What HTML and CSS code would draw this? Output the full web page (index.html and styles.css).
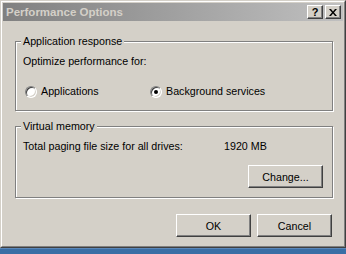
FILE: index.html
```html
<!DOCTYPE html>
<html lang="en">
<head>
    <meta charset="UTF-8">
    <meta name="viewport" content="width=device-width, initial-scale=1.0">
    <title>Performance Options</title>
    <link rel="stylesheet" href="styles.css">
</head>
<body>
    <div class="window">
        <div class="frame">
            <div class="caption">
                <span class="caption-text">Performance Options</span>
                <div class="caption-buttons">
                    <button class="caption-btn help">?</button>
                    <button class="caption-btn close">
                        <svg width="8" height="7" viewBox="0 0 8 7">
                            <path d="M0 0h2l2 2.5L6 0h2L5 3.5 8 7H6L4 4.5 2 7H0l3-3.5z" fill="#000"/>
                        </svg>
                    </button>
                </div>
            </div>
            <div class="content">
                <fieldset class="group">
                    <legend>Application response</legend>
                    <div class="row">Optimize performance for:</div>
                    <div class="options">
                        <label class="option first"><span class="radio"></span>Applications</label>
                        <label class="option"><span class="radio checked"></span>Background services</label>
                    </div>
                </fieldset>
                <fieldset class="group">
                    <legend>Virtual memory</legend>
                    <div class="row">
                        <span class="label-wide">Total paging file size for all drives:</span>
                        <span>1920 MB</span>
                    </div>
                    <div class="group-actions">
                        <button class="btn">Change...</button>
                    </div>
                </fieldset>
                <div class="dialog-actions">
                    <button class="btn">OK</button>
                    <button class="btn">Cancel</button>
                </div>
            </div>
        </div>
    </div>
    <div class="taskbar"></div>
</body>
</html>
```

FILE: styles.css
```css
body {
    margin: 0;
    font-family: "Liberation Sans", Arial, sans-serif;
    font-size: 10.7px;
    line-height: 13px;
    color: #000;
    background: #d4d0c8;
}
.window {
    width: 346px;
    height: 248px;
    box-sizing: border-box;
    border: 1px solid;
    border-color: #d4d0c8 #404040 #404040 #d4d0c8;
}
.frame {
    height: 100%;
    box-sizing: border-box;
    border: 1px solid;
    border-color: #fff #808080 #808080 #fff;
    padding: 1px;
}
.caption {
    height: 18px;
    display: flex;
    align-items: center;
    justify-content: space-between;
    background: linear-gradient(to right, #808080, #c0c0c0);
    padding: 0 2px 0 3px;
}
.caption-text {
    font-weight: bold;
    font-size: 11.5px;
    color: #d4d0c8;
}
.caption-buttons {
    display: flex;
    gap: 2px;
}
.caption-btn {
    width: 16px;
    height: 14px;
    padding: 0;
    margin: 0;
    display: flex;
    align-items: center;
    justify-content: center;
    background: #d4d0c8;
    border: 1px solid;
    border-color: #fff #404040 #404040 #fff;
    box-shadow: inset -1px -1px 0 #808080;
    font-family: "Liberation Sans", Arial, sans-serif;
    font-weight: bold;
    font-size: 11px;
    line-height: 11px;
    color: #000;
}
.content {
    padding: 0 10px 0 12px;
}
.group {
    margin: 14px 0 0;
    padding: 7px 9px 12px 7px;
    border: 1px solid #808080;
    box-shadow: inset 1px 1px 0 #fff, 1px 1px 0 #fff;
    min-width: 0;
}
.group + .group {
    margin-top: 9px;
    padding-bottom: 9px;
}
.group legend {
    padding: 0 2px;
    margin-left: -2px;
    background: #d4d0c8;
}
.row {
    display: flex;
}
.label-wide {
    width: 201px;
}
.options {
    display: flex;
    margin-top: 17px;
}
.option {
    display: flex;
    align-items: center;
    gap: 4px;
    padding-left: 2px;
}
.option.first {
    width: 123px;
}
.radio {
    width: 12px;
    height: 12px;
    box-sizing: border-box;
    border-radius: 50%;
    background: #fff;
    border: 1px solid;
    border-color: #808080 #fff #fff #808080;
    box-shadow: inset 1px 1px 0 #404040, inset -1px -1px 0 #d4d0c8;
    display: flex;
    align-items: center;
    justify-content: center;
}
.radio.checked::after {
    content: "";
    width: 4px;
    height: 4px;
    border-radius: 50%;
    background: #000;
}
.group-actions {
    display: flex;
    justify-content: flex-end;
    margin-top: 12px;
}
.btn {
    width: 75px;
    height: 23px;
    margin: 0;
    padding: 0;
    background: #d4d0c8;
    border: 1px solid;
    border-color: #fff #404040 #404040 #fff;
    box-shadow: inset -1px -1px 0 #808080;
    font-family: "Liberation Sans", Arial, sans-serif;
    font-size: 10.7px;
    color: #000;
}
.dialog-actions {
    display: flex;
    justify-content: flex-end;
    gap: 6px;
    margin-top: 16px;
    margin-right: 1px;
}
.taskbar {
    height: 6px;
    background: #3a6ea5;
    border-top: 1px solid #5a86b8;
}
```
